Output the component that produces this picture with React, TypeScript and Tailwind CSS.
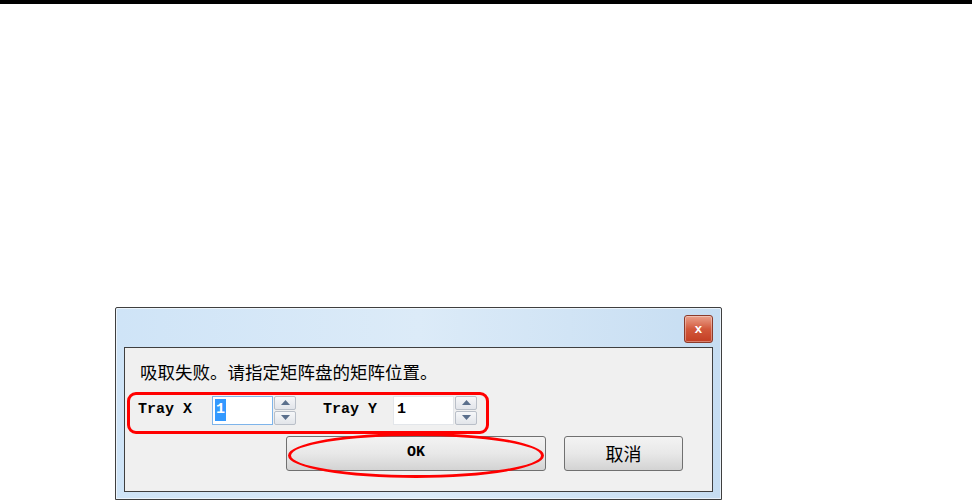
import React from "react";

const mono = { fontFamily: '"Liberation Mono", "DejaVu Sans Mono", monospace' };
const cjk = { fontFamily: '"Noto Sans CJK SC", "Noto Sans", sans-serif' };

const Spinner = () => (
  <div className="flex flex-col w-[22px] h-[29px] gap-[1px]">
    {[0, 1].map((i) => (
      <div
        key={i}
        className="flex-1 flex items-center justify-center border border-[#b9bfc8] rounded-[2px] bg-gradient-to-b from-[#f6f7f9] to-[#e2e5ea]"
      >
        <svg width="9" height="5" viewBox="0 0 9 5">
          {i === 0 ? (
            <path d="M0 5 L4.5 0 L9 5 Z" fill="#5a6f8c" />
          ) : (
            <path d="M0 0 L4.5 5 L9 0 Z" fill="#5a6f8c" />
          )}
        </svg>
      </div>
    ))}
  </div>
);

const NumberBox = ({ focused }: { focused?: boolean }) => (
  <div className="flex items-center gap-[1px]">
    <div
      className={
        focused
          ? "w-[61px] h-[29px] bg-white border border-[#7eb4ea] flex items-center pl-[2px]"
          : "w-[61px] h-[29px] bg-white border border-[#e3e6ea] flex items-center pl-[2px]"
      }
    >
      <span
        className={
          focused
            ? "bg-[#3399ff] text-white text-[15px] font-bold leading-[22px] px-[1px]"
            : "text-black text-[15px] font-bold leading-[22px] px-[1px]"
        }
        style={mono}
      >
        1
      </span>
    </div>
    <Spinner />
  </div>
);

export default function App() {
  return (
    <div className="w-[972px] h-[501px] bg-white overflow-hidden">
      <div className="h-[4px] bg-black" />
      <div className="ml-[115px] mt-[303px] w-[607px] h-[193px] border border-[#3f3f3f] rounded-t-[2px] bg-gradient-to-r from-[#cfe4f7] via-[#dcebf8] to-[#c6ddf2] px-[8px] pb-[7px] flex flex-col shadow-[inset_0_0_0_1px_rgba(255,255,255,0.6)]">
        <div className="h-[39px] flex justify-end items-start pt-[7px]">
          <div className="w-[29px] h-[28px] rounded-[3px] border border-[#8b3b2b] bg-gradient-to-b from-[#e9a08b] via-[#d2583b] to-[#c33d22] flex items-center justify-center shadow-[inset_0_0_0_1px_rgba(255,255,255,0.35)]">
            <span className="text-white text-[13px] font-bold leading-none" style={mono}>
              x
            </span>
          </div>
        </div>
        <div className="flex-1 border border-[#3f3f3f] bg-[#f0f0f0] flex flex-col relative">
          <div className="pl-[15px] pt-[14px] text-[17.5px] leading-[20px] text-black" style={cjk}>
            吸取失败。请指定矩阵盘的矩阵位置。
          </div>
          <div className="ml-[2px] mt-[10px] w-[362px] h-[42px] border-[3px] border-[#ff0000] rounded-[9px] flex items-center pl-[8px] pb-[6px]">
            <span className="w-[74px] text-[15px] font-bold text-black leading-[20px]" style={mono}>
              Tray X
            </span>
            <NumberBox focused />
            <span className="ml-[27px] w-[70px] text-[15px] font-bold text-black leading-[20px]" style={mono}>
              Tray Y
            </span>
            <NumberBox />
          </div>
          <div className="mt-[2px] ml-[161px] flex gap-[18px] relative">
            <button className="w-[260px] h-[35px] border border-[#707070] rounded-[3px] bg-gradient-to-b from-[#f3f3f3] via-[#e8e8e8] to-[#d3d3d3] flex items-center justify-center">
              <span className="text-[15px] font-bold text-black" style={mono}>
                OK
              </span>
            </button>
            <button className="w-[119px] h-[35px] border border-[#707070] rounded-[3px] bg-gradient-to-b from-[#f3f3f3] via-[#e8e8e8] to-[#d3d3d3] flex items-center justify-center">
              <span className="text-[18px] text-black" style={cjk}>
                取消
              </span>
            </button>
            <div className="absolute left-[2px] top-[-3px] w-[256px] h-[45px] rounded-[50%] border-[3px] border-[#ff0000] pointer-events-none" />
          </div>
        </div>
      </div>
    </div>
  );
}
